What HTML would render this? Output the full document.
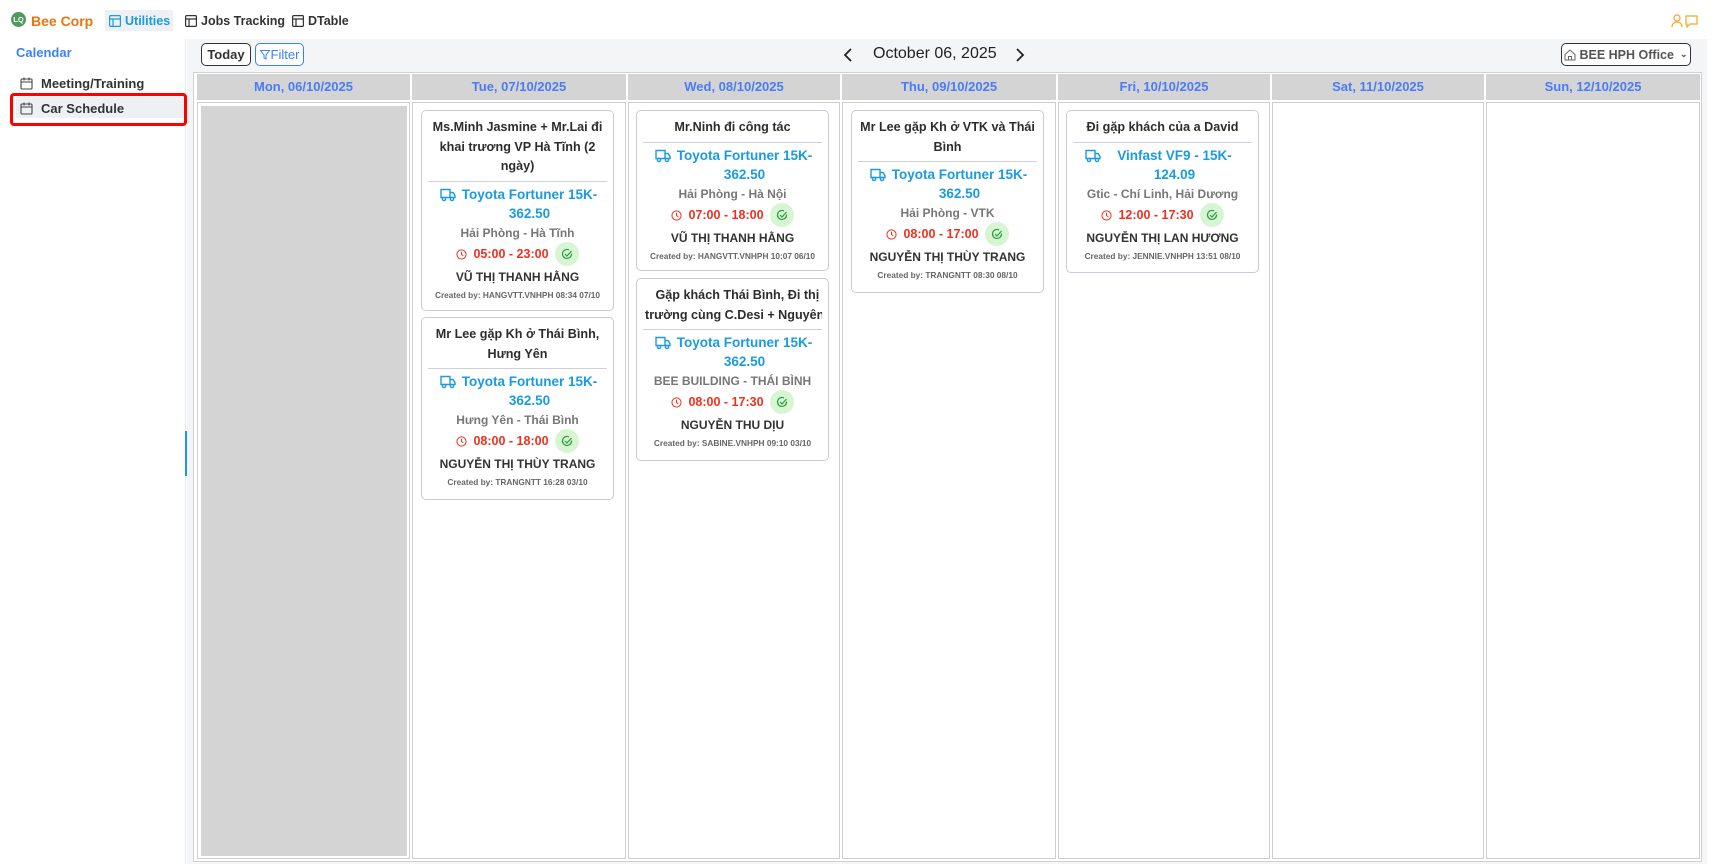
<!DOCTYPE html>
<html><head><meta charset="utf-8"><style>
*{box-sizing:border-box;margin:0;padding:0}
body{width:1715px;height:864px;overflow:hidden;background:#fff;font-family:"Liberation Sans","Noto Sans CJK SC",sans-serif;color:#333;position:relative}
.abs{position:absolute}
.hdr{left:0;top:0;width:1715px;height:39px;background:#fff}
.nav{top:10px;height:21px;display:flex;align-items:center;font-size:12.5px;font-weight:bold;color:#333}
.side{left:0;top:39px;width:186px;height:825px;background:#fff;border-right:1px solid #e5e7eb}
.main{left:187px;top:39px;width:1520px;height:825px;background:#f4f5f7}
.btn{border:1px solid #333;border-radius:5px;height:23px;font-size:13px;font-weight:bold;display:flex;align-items:center;justify-content:center;background:#fff}
.grid{left:193px;top:72px;width:1509px;height:790px;border:1px solid #d0d0d0;background:#fff}
.hcell{position:absolute;top:74px;height:26px;background:#d4d4d4;color:#4a7cf7;font-size:13px;font-weight:bold;text-align:center;line-height:26px}
.cell{position:absolute;top:102px;height:757px;border:1px solid #cfcfcf;background:#fff}
.card{position:absolute;border:1px solid #c9ccd6;border-radius:5px;background:#fff;text-align:center;padding:7px 6px 0;overflow:hidden}
.t{font-size:12.6px;font-weight:bold;line-height:19.7px;color:#2d2d2d;overflow:hidden;white-space:nowrap}
.hr{border-top:1px solid #cfd2da;margin:4px 0 4px}
.car{font-size:13.5px;font-weight:bold;color:#1a9be0;line-height:18.5px;position:relative;padding:0 4px 0 28px;white-space:nowrap}
.car svg{position:absolute;left:12px;top:2px}
.rt{font-size:12px;color:#777;line-height:20px;font-weight:bold;white-space:nowrap}
.tm{height:22px;display:flex;align-items:center;justify-content:center;gap:6px;color:#f0301e;font-size:12.5px;font-weight:bold}
.ck{width:24px;height:24px;border-radius:50%;background:#d7f5d3;display:flex;align-items:center;justify-content:center}
.dr{font-size:12px;font-weight:bold;line-height:20px;color:#333;margin-top:2px;white-space:nowrap}
.cb{font-size:8.3px;color:#666;line-height:14px;font-weight:bold;margin-top:1px;white-space:nowrap}
</style></head><body>
<div class="abs hdr"></div>
<div class="abs" style="left:11px;top:12px;width:15px;height:15px;border-radius:50%;background:#4e9a5c;color:#fff;font-size:7.5px;line-height:15px;text-align:center;font-weight:bold">LQ</div>
<div class="abs nav" style="left:31px;color:#e8740c;font-size:14px">Bee Corp</div>
<div class="abs nav" style="left:105px;width:68px;background:#eef0f4;color:#1a9be0;padding-left:4px;gap:4px"><svg width="12" height="12" viewBox="0 0 12 12" fill="none" stroke="#1a9be0" stroke-width="1.2"><rect x="0.6" y="0.6" width="10.8" height="10.8" rx="1"/><path d="M0.6 4H11.4M4 4V11.4"/></svg>Utilities</div>
<div class="abs nav" style="left:185px;gap:4px"><svg width="12" height="12" viewBox="0 0 12 12" fill="none" stroke="#333" stroke-width="1.2"><rect x="0.6" y="0.6" width="10.8" height="10.8" rx="1"/><path d="M0.6 4H11.4M4 4V11.4"/></svg>Jobs Tracking</div>
<div class="abs nav" style="left:292px;gap:4px"><svg width="12" height="12" viewBox="0 0 12 12" fill="none" stroke="#333" stroke-width="1.2"><rect x="0.6" y="0.6" width="10.8" height="10.8" rx="1"/><path d="M0.6 4H11.4M4 4V11.4"/></svg>DTable</div>
<svg class="abs" style="left:1671px;top:14px" width="28" height="14" viewBox="0 0 28 14" fill="none" stroke="#f5a623" stroke-width="1.2"><circle cx="6" cy="4" r="3"/><path d="M1 13c0-3 2-5 5-5s5 2 5 5"/><path d="M15 2h11v8h-7l-3 3v-3h-1z"/></svg>
<div class="abs" style="left:1705px;top:0;width:10px;height:864px;background:#fff"></div>

<div class="abs side"></div>
<div class="abs" style="left:16px;top:45px;font-size:13px;font-weight:bold;color:#3b82f6">Calendar</div>
<div class="abs" style="left:16px;top:97px;width:168px;height:21px;background:#eef0f4"></div>
<div class="abs" style="left:20px;top:76px;display:flex;align-items:center;gap:8px;font-size:13px;font-weight:bold;color:#333"><svg width="13" height="13" viewBox="0 0 13 13" fill="none" stroke="#444" stroke-width="1.1"><rect x="1" y="2" width="11" height="10" rx="1"/><path d="M1 5h11M4 0.5v3M9 0.5v3"/></svg>Meeting/Training</div>
<div class="abs" style="left:20px;top:101px;display:flex;align-items:center;gap:8px;font-size:13px;font-weight:bold;color:#333"><svg width="13" height="13" viewBox="0 0 13 13" fill="none" stroke="#444" stroke-width="1.1"><rect x="1" y="2" width="11" height="10" rx="1"/><path d="M1 5h11M4 0.5v3M9 0.5v3"/></svg>Car Schedule</div>
<div class="abs" style="left:10px;top:93px;width:177px;height:33px;border:3px solid #f00;border-radius:4px"></div>

<div class="abs main"></div>
<div class="abs" style="left:185px;top:431px;width:2px;height:45px;background:#1a9be0"></div>
<div class="abs btn" style="left:201px;top:43px;width:50px">Today</div>
<div class="abs btn" style="left:255px;top:43px;width:49px;border-color:#3b82f6;color:#3b82f6;font-weight:normal;gap:1px"><svg width="10" height="10" viewBox="0 0 10 10" fill="none" stroke="#3b82f6" stroke-width="1"><path d="M0.5 0.5h9L6 5v4L4 8V5z"/></svg>Filter</div>
<svg class="abs" style="left:843px;top:48px" width="10" height="14" viewBox="0 0 10 14" fill="none" stroke="#222" stroke-width="1.8"><path d="M8 1L2 7l6 6"/></svg>
<div class="abs" style="left:873px;top:45px;font-size:16px;color:#222">October 06, 2025</div>
<svg class="abs" style="left:1015px;top:48px" width="10" height="14" viewBox="0 0 10 14" fill="none" stroke="#222" stroke-width="1.8"><path d="M2 1l6 6-6 6"/></svg>
<div class="abs btn" style="left:1561px;top:43px;width:130px;font-weight:bold;color:#555;font-size:12.5px;gap:3px"><svg width="12" height="12" viewBox="0 0 12 12" fill="none" stroke="#666" stroke-width="1"><path d="M1 5.5L6 1l5 4.5V11H1z"/><path d="M4.5 11V7.5h3V11"/></svg>BEE HPH Office <span style="font-size:9px;margin-left:3px">&#8964;</span></div>

<div class="abs grid"></div>
<div class="hcell" style="left:197px;width:213px">Mon, 06/10/2025</div>
<div class="hcell" style="left:412px;width:214px">Tue, 07/10/2025</div>
<div class="hcell" style="left:628px;width:212px">Wed, 08/10/2025</div>
<div class="hcell" style="left:842px;width:214px">Thu, 09/10/2025</div>
<div class="hcell" style="left:1058px;width:212px">Fri, 10/10/2025</div>
<div class="hcell" style="left:1272px;width:212px">Sat, 11/10/2025</div>
<div class="hcell" style="left:1486px;width:214px">Sun, 12/10/2025</div>
<div class="cell" style="left:197px;width:213px"></div>
<div class="abs" style="left:201px;top:106px;width:206px;height:750px;background:#d4d4d4"></div>
<div class="cell" style="left:412px;width:214px"></div>
<div class="cell" style="left:628px;width:212px"></div>
<div class="cell" style="left:842px;width:214px"></div>
<div class="cell" style="left:1058px;width:212px"></div>
<div class="cell" style="left:1272px;width:212px"></div>
<div class="cell" style="left:1486px;width:214px"></div>

<svg width="0" height="0" style="position:absolute"><defs>
<symbol id="truck" viewBox="0 0 16 14"><g fill="none" stroke="#1a9be0" stroke-width="1.4"><path d="M1 1.5h9v8H1z"/><path d="M10 4.5h3l2 3v2h-5"/><circle cx="4" cy="11" r="1.6" fill="#fff"/><circle cx="12" cy="11" r="1.6" fill="#fff"/></g></symbol>
<symbol id="clk" viewBox="0 0 12 12"><g fill="none" stroke="#f0301e" stroke-width="1.1"><circle cx="6" cy="6" r="5"/><path d="M6 3v3l2 1.5"/></g></symbol>
<symbol id="chk" viewBox="0 0 12 12"><g fill="none" stroke="#2a9d3c" stroke-width="1.2"><path d="M10.5 5.5A4.5 4.5 0 1 1 8 1.9"/><path d="M4 6l2 2 4.5-5"/></g></symbol>
</defs></svg>

<div class="card" style="left:421px;top:110px;width:193px;height:201px">
<div class="t" style="height:59px">Ms.Minh Jasmine + Mr.Lai đi<br>khai trương VP Hà Tĩnh (2<br>ngày)</div>
<div class="hr"></div>
<div class="car"><svg width="16" height="14"><use href="#truck"/></svg>Toyota Fortuner 15K-<br>362.50</div>
<div class="rt">Hải Phòng - Hà Tĩnh</div>
<div class="tm"><svg width="11" height="11"><use href="#clk"/></svg>05:00 - 23:00<div class="ck"><svg width="12" height="12"><use href="#chk"/></svg></div></div>
<div class="dr">VŨ THỊ THANH HẰNG</div>
<div class="cb">Created by: HANGVTT.VNHPH 08:34 07/10</div>
</div>
<div class="card" style="left:421px;top:317px;width:193px;height:183px">
<div class="t" style="height:39px">Mr Lee gặp Kh ở Thái Bình,<br>Hưng Yên</div>
<div class="hr"></div>
<div class="car"><svg width="16" height="14"><use href="#truck"/></svg>Toyota Fortuner 15K-<br>362.50</div>
<div class="rt">Hưng Yên - Thái Bình</div>
<div class="tm"><svg width="11" height="11"><use href="#clk"/></svg>08:00 - 18:00<div class="ck"><svg width="12" height="12"><use href="#chk"/></svg></div></div>
<div class="dr">NGUYỄN THỊ THÙY TRANG</div>
<div class="cb">Created by: TRANGNTT 16:28 03/10</div>
</div>
<div class="card" style="left:636px;top:110px;width:193px;height:161px">
<div class="t" style="height:20px">Mr.Ninh đi công tác</div>
<div class="hr"></div>
<div class="car"><svg width="16" height="14"><use href="#truck"/></svg>Toyota Fortuner 15K-<br>362.50</div>
<div class="rt">Hải Phòng - Hà Nội</div>
<div class="tm"><svg width="11" height="11"><use href="#clk"/></svg>07:00 - 18:00<div class="ck"><svg width="12" height="12"><use href="#chk"/></svg></div></div>
<div class="dr">VŨ THỊ THANH HẰNG</div>
<div class="cb">Created by: HANGVTT.VNHPH 10:07 06/10</div>
</div>
<div class="card" style="left:636px;top:278px;width:193px;height:183px">
<div class="t" style="height:39px;text-align:left;padding-left:2px">&nbsp;&nbsp;&nbsp;Gặp khách Thái Bình, Đi thị<br>trường cùng C.Desi + Nguyên</div>
<div class="hr"></div>
<div class="car"><svg width="16" height="14"><use href="#truck"/></svg>Toyota Fortuner 15K-<br>362.50</div>
<div class="rt">BEE BUILDING - THÁI BÌNH</div>
<div class="tm"><svg width="11" height="11"><use href="#clk"/></svg>08:00 - 17:30<div class="ck"><svg width="12" height="12"><use href="#chk"/></svg></div></div>
<div class="dr">NGUYỄN THU DỊU</div>
<div class="cb">Created by: SABINE.VNHPH 09:10 03/10</div>
</div>
<div class="card" style="left:851px;top:110px;width:193px;height:183px">
<div class="t" style="height:39px">Mr Lee gặp Kh ở VTK và Thái<br>Bình</div>
<div class="hr"></div>
<div class="car"><svg width="16" height="14"><use href="#truck"/></svg>Toyota Fortuner 15K-<br>362.50</div>
<div class="rt">Hải Phòng - VTK</div>
<div class="tm"><svg width="11" height="11"><use href="#clk"/></svg>08:00 - 17:00<div class="ck"><svg width="12" height="12"><use href="#chk"/></svg></div></div>
<div class="dr">NGUYỄN THỊ THÙY TRANG</div>
<div class="cb">Created by: TRANGNTT 08:30 08/10</div>
</div>
<div class="card" style="left:1066px;top:110px;width:193px;height:163px">
<div class="t" style="height:20px">Đi gặp khách của a David</div>
<div class="hr"></div>
<div class="car"><svg width="16" height="14"><use href="#truck"/></svg>Vinfast VF9 - 15K-<br>124.09</div>
<div class="rt">Gtic - Chí Linh, Hải Dương</div>
<div class="tm"><svg width="11" height="11"><use href="#clk"/></svg>12:00 - 17:30<div class="ck"><svg width="12" height="12"><use href="#chk"/></svg></div></div>
<div class="dr">NGUYỄN THỊ LAN HƯƠNG</div>
<div class="cb">Created by: JENNIE.VNHPH 13:51 08/10</div>
</div>
</body></html>
